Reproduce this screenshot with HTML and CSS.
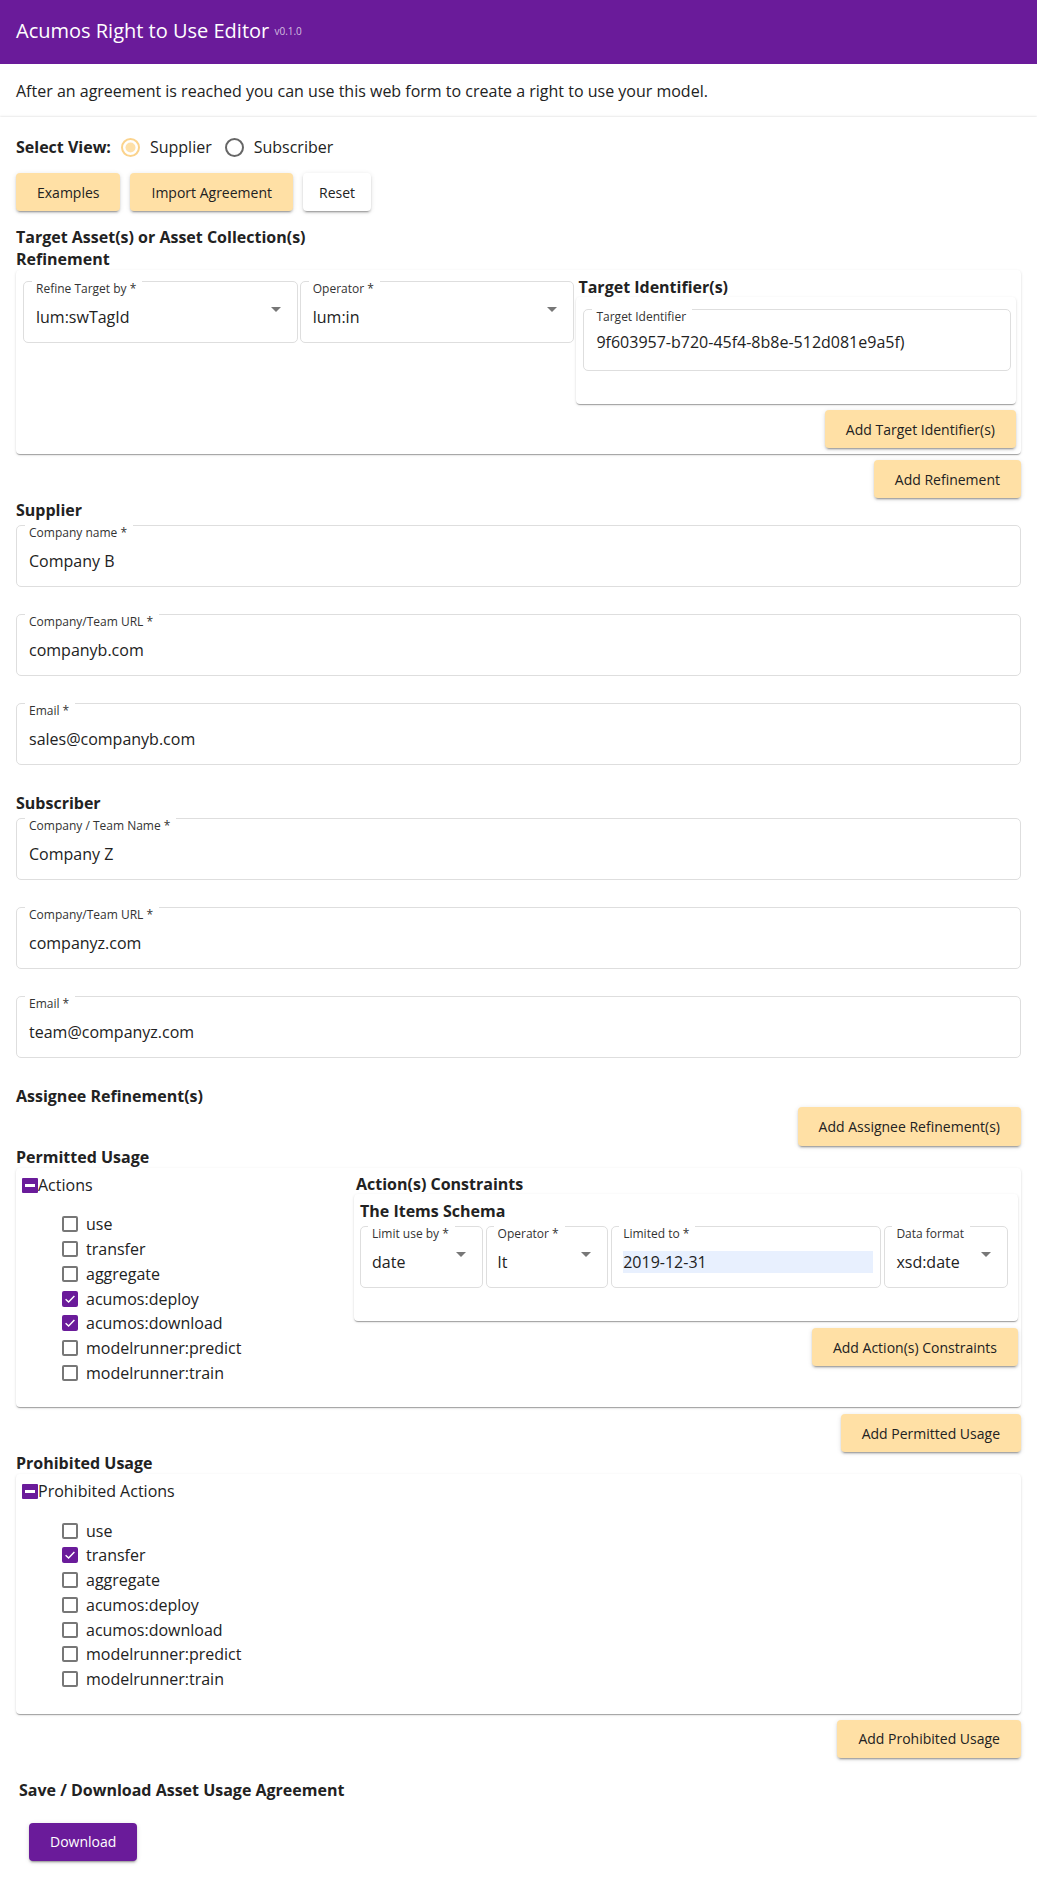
FILE: index.html
```html
<!DOCTYPE html>
<html lang="en">
<head>
<meta charset="utf-8">
<title>Acumos Right to Use Editor</title>
<link rel="stylesheet" href="styles.css">
</head>
<body>
<header class="appbar">
  <div class="app-title">Acumos Right to Use Editor <span class="app-version">v0.1.0</span></div>
</header>
<section class="intro">After an agreement is reached you can use this web form to create a right to use your model.</section>
<main class="main">
  <div class="view-row">
    <span class="view-label">Select View:</span>
    <span class="radio radio-on"><svg width="19" height="19" viewBox="0 0 19 19"><circle cx="9.5" cy="9.5" r="8.5" fill="#fff" stroke="#fbd38c" stroke-width="2"/><circle cx="9.5" cy="9.5" r="5" fill="#fee0a8"/></svg></span>
    <span class="radio-text">Supplier</span>
    <span class="radio radio-off"><svg width="19" height="19" viewBox="0 0 19 19"><circle cx="9.5" cy="9.5" r="8.5" fill="#fff" stroke="#666" stroke-width="2"/></svg></span>
    <span class="radio-text">Subscriber</span>
  </div>
  <div class="btn-row">
    <button class="btn btn-peach">Examples</button>
    <button class="btn btn-peach">Import Agreement</button>
    <button class="btn btn-white">Reset</button>
  </div>

  <h2 class="heading heading-target">Target Asset(s) or Asset Collection(s)</h2>
  <h2 class="heading">Refinement</h2>
  <div class="card refine-card">
    <div class="field select refine-select">
      <span class="field-label">Refine Target by *</span>
      <span class="field-value">lum:swTagId</span>
      <span class="arrow"></span>
    </div>
    <div class="field select refine-select">
      <span class="field-label">Operator *</span>
      <span class="field-value">lum:in</span>
      <span class="arrow"></span>
    </div>
    <div class="target-col">
      <h3 class="heading heading-col">Target Identifier(s)</h3>
      <div class="card inner-card">
        <div class="field field-target">
          <span class="field-label">Target Identifier</span>
          <span class="field-value">9f603957-b720-45f4-8b8e-512d081e9a5f)</span>
        </div>
      </div>
      <div class="actions-right gap-6"><button class="btn btn-peach">Add Target Identifier(s)</button></div>
    </div>
  </div>
  <div class="actions-right gap-6"><button class="btn btn-peach">Add Refinement</button></div>

  <h2 class="heading heading-supplier">Supplier</h2>
  <div class="field-stack">
    <div class="field"><span class="field-label">Company name *</span><span class="field-value">Company B</span></div>
    <div class="field"><span class="field-label">Company/Team URL *</span><span class="field-value">companyb.com</span></div>
    <div class="field"><span class="field-label">Email *</span><span class="field-value">sales@companyb.com</span></div>
  </div>

  <h2 class="heading heading-section">Subscriber</h2>
  <div class="field-stack">
    <div class="field"><span class="field-label">Company / Team Name *</span><span class="field-value">Company Z</span></div>
    <div class="field"><span class="field-label">Company/Team URL *</span><span class="field-value">companyz.com</span></div>
    <div class="field"><span class="field-label">Email *</span><span class="field-value">team@companyz.com</span></div>
  </div>

  <h2 class="heading heading-section">Assignee Refinement(s)</h2>
  <div class="actions-right"><button class="btn btn-peach btn-tall">Add Assignee Refinement(s)</button></div>

  <h2 class="heading">Permitted Usage</h2>
  <div class="card usage-card permitted-card">
    <div class="usage-col">
      <div class="tree-head"><span class="minus-box"></span>Actions</div>
      <ul class="check-list">
        <li><span class="cb"></span>use</li>
        <li><span class="cb"></span>transfer</li>
        <li><span class="cb"></span>aggregate</li>
        <li><span class="cb cb-on"><svg width="16" height="16" viewBox="0 0 16 16"><path d="M3.6 8.2 L6.6 11.1 L12.4 4.9" fill="none" stroke="#fff" stroke-width="1.4"/></svg></span>acumos:deploy</li>
        <li><span class="cb cb-on"><svg width="16" height="16" viewBox="0 0 16 16"><path d="M3.6 8.2 L6.6 11.1 L12.4 4.9" fill="none" stroke="#fff" stroke-width="1.4"/></svg></span>acumos:download</li>
        <li><span class="cb"></span>modelrunner:predict</li>
        <li><span class="cb"></span>modelrunner:train</li>
      </ul>
    </div>
    <div class="constraints-col">
      <h3 class="heading heading-col">Action(s) Constraints</h3>
      <div class="card schema-card">
        <h4 class="heading heading-schema">The Items Schema</h4>
        <div class="schema-grid">
          <div class="field select"><span class="field-label">Limit use by *</span><span class="field-value">date</span><span class="arrow"></span></div>
          <div class="field select"><span class="field-label">Operator *</span><span class="field-value">lt</span><span class="arrow"></span></div>
          <div class="field field-limited"><span class="field-label">Limited to *</span><span class="field-value autofill">2019-12-31</span></div>
          <div class="field select"><span class="field-label">Data format</span><span class="field-value">xsd:date</span><span class="arrow"></span></div>
        </div>
      </div>
      <div class="actions-right gap-7"><button class="btn btn-peach">Add Action(s) Constraints</button></div>
    </div>
  </div>
  <div class="actions-right gap-7"><button class="btn btn-peach">Add Permitted Usage</button></div>

  <h2 class="heading">Prohibited Usage</h2>
  <div class="card usage-card">
    <div class="usage-col">
      <div class="tree-head"><span class="minus-box"></span>Prohibited Actions</div>
      <ul class="check-list">
        <li><span class="cb"></span>use</li>
        <li><span class="cb cb-on"><svg width="16" height="16" viewBox="0 0 16 16"><path d="M3.6 8.2 L6.6 11.1 L12.4 4.9" fill="none" stroke="#fff" stroke-width="1.4"/></svg></span>transfer</li>
        <li><span class="cb"></span>aggregate</li>
        <li><span class="cb"></span>acumos:deploy</li>
        <li><span class="cb"></span>acumos:download</li>
        <li><span class="cb"></span>modelrunner:predict</li>
        <li><span class="cb"></span>modelrunner:train</li>
      </ul>
    </div>
  </div>
  <div class="actions-right gap-6"><button class="btn btn-peach">Add Prohibited Usage</button></div>

  <h2 class="heading heading-save">Save / Download Asset Usage Agreement</h2>
  <div class="download-row"><button class="btn btn-purple">Download</button></div>
</main>
</body>
</html>
```

FILE: styles.css
```css
* { box-sizing: border-box; }

html, body {
  margin: 0;
  padding: 0;
  background: #fff;
  font-family: "Open Sans", "Noto Sans", "Liberation Sans", sans-serif;
  color: #222;
}

.appbar {
  height: 64px;
  background: #6a1b9a;
  display: flex;
  align-items: center;
  padding: 0 16px 2px;
}

.app-title {
  color: #fff;
  font-size: 20px;
  line-height: 28px;
  white-space: nowrap;
}

.app-version {
  color: rgba(255, 255, 255, 0.72);
  font-size: 10px;
  vertical-align: 3px;
}

.intro {
  font-size: 16px;
  line-height: 22px;
  padding: 16px 16px 15px;
  color: #222;
}

.main {
  padding: 14px 16px 11px;
  box-shadow: 0 -1px 2px rgba(0, 0, 0, 0.06), 0 0 2px rgba(0, 0, 0, 0.08);
  display: flex;
  flex-direction: column;
}

.view-row {
  height: 32px;
  display: flex;
  align-items: center;
  font-size: 16px;
}

.view-label {
  font-weight: 700;
  margin-right: 10px;
}

.radio {
  display: inline-flex;
  width: 19px;
  height: 19px;
}

.radio-text {
  margin-left: 10px;
  margin-right: 13px;
}

.btn-row {
  display: flex;
  gap: 10px;
  margin-top: 10px;
}

.btn {
  font-family: inherit;
  font-size: 14px;
  height: 38px;
  border: none;
  border-radius: 4px;
  padding: 0 21px;
  color: #222;
  cursor: pointer;
  box-shadow: 0 3px 1px -2px rgba(0, 0, 0, 0.2), 0 2px 2px 0 rgba(0, 0, 0, 0.14), 0 1px 5px 0 rgba(0, 0, 0, 0.12);
}

.btn-peach { background: #ffe0a5; }
.btn-white { background: #fff; padding: 0 16px; }
.btn-purple { background: #6a1b9a; color: #fff; }
.btn-tall { height: 39px; }

.heading {
  margin: 0;
  font-size: 16px;
  font-weight: 700;
  line-height: 22px;
  color: #222;
}

.heading-target { margin-top: 15px; }
.heading-supplier { margin-top: 1px; }
.heading-section { margin-top: 27px; }
.heading-col { line-height: 20px; padding-left: 2px; }
.heading-schema { font-size: 16px; line-height: 22px; }
.heading-save { margin-top: 21px; padding-left: 3px; }

.card {
  background: #fff;
  border-radius: 4px;
  box-shadow: 0 2px 1px -1px rgba(0, 0, 0, 0.2), 0 1px 1px 0 rgba(0, 0, 0, 0.14), 0 1px 3px 0 rgba(0, 0, 0, 0.12);
}

.refine-card {
  display: grid;
  grid-template-columns: 5fr 5fr 8fr;
  column-gap: 2px;
  align-items: start;
  padding: 7px 5px 6px 7px;
}

.refine-select { margin-top: 4px; }

.inner-card {
  padding: 12px 5px 33px 7px;
}

.actions-right {
  display: flex;
  justify-content: flex-end;
}

.gap-6 { margin-top: 6px; }
.gap-7 { margin-top: 7px; }

.field {
  position: relative;
  height: 62px;
  border: 1px solid #dedede;
  border-radius: 5px;
  padding: 24px 12px 0 12px;
  background: #fff;
}

.field-label {
  position: absolute;
  top: -1px;
  left: 8px;
  padding: 0 6px 0 4px;
  background: #fff;
  font-size: 12px;
  line-height: 16px;
  color: #333;
  white-space: nowrap;
}

.field-value {
  display: block;
  font-size: 16px;
  line-height: 22px;
  color: #222;
  white-space: nowrap;
}

.field-target { padding-top: 21px; }

.arrow {
  position: absolute;
  right: 16px;
  top: 25px;
  width: 0;
  height: 0;
  border-left: 5px solid transparent;
  border-right: 5px solid transparent;
  border-top: 5px solid #777;
}

.field-stack {
  display: flex;
  flex-direction: column;
  gap: 27px;
  margin-top: 4px;
}

.usage-card {
  display: grid;
  grid-template-columns: 1fr;
  padding: 6px 3px 22px 6px;
}

.permitted-card {
  grid-template-columns: 1fr 2fr;
  align-items: start;
}

.tree-head {
  display: flex;
  align-items: center;
  font-size: 16px;
  line-height: 22px;
}

.minus-box {
  width: 16px;
  height: 15px;
  background: #6a1b9a;
  border-radius: 1px;
  position: relative;
}

.minus-box::after {
  content: "";
  position: absolute;
  left: 3px;
  right: 3px;
  top: 6px;
  height: 3px;
  background: #fff;
}

.check-list {
  list-style: none;
  margin: 16px 0 0;
  padding: 0 0 0 40px;
}

.check-list li {
  display: flex;
  align-items: center;
  height: 24.75px;
  font-size: 16px;
  color: #222;
}

.cb {
  width: 16px;
  height: 16px;
  border: 2px solid #777;
  border-radius: 2px;
  margin-right: 8px;
  flex: none;
  display: inline-flex;
}

.cb-on {
  border: none;
  background: #6a1b9a;
}

.constraints-col {
  display: flex;
  flex-direction: column;
}

.schema-card {
  padding: 6px 10px 33px 6px;
}

.schema-grid {
  display: grid;
  grid-template-columns: 123fr 123fr 271fr 124fr;
  gap: 3px;
  margin-top: 4px;
}

.schema-grid .field { padding-left: 11px; }
.schema-grid .field-label { left: 7px; }

.field-limited { padding-right: 7px; }

.autofill {
  background: #e8f0fe;
  height: 22px;
}

.download-row {
  margin-top: 22px;
  padding-left: 13px;
}
```
